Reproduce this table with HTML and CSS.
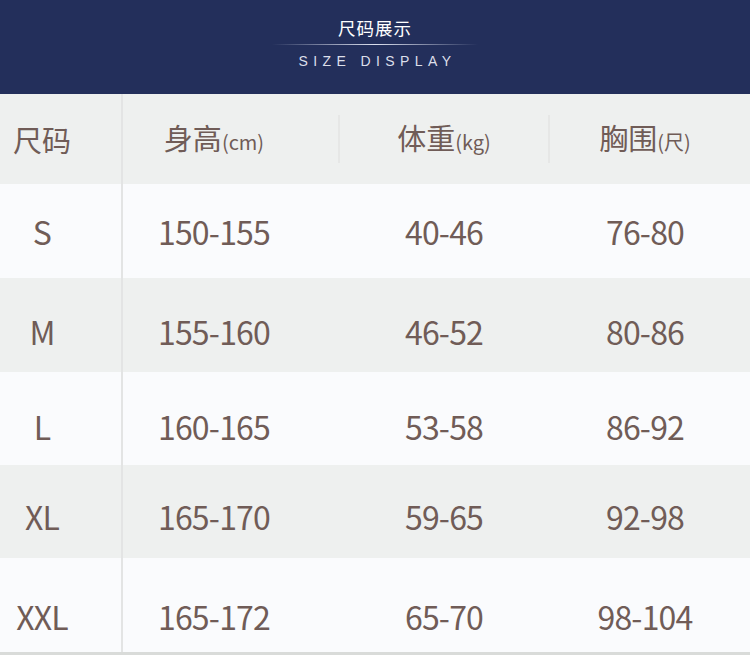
FILE: index.html
```html
<!DOCTYPE html>
<html lang="zh">
<head>
<meta charset="utf-8">
<link rel="stylesheet" href="styles.css">
</head>
<body>
<div class="page">
  <header class="banner">
    <div class="title">尺码展示</div>
    <div class="rule"></div>
    <div class="subtitle">SIZE DISPLAY</div>
  </header>
  <div class="table">
    <div class="row head">
      <div class="cell c1">尺码</div>
      <div class="cell c2">身高<span class="unit">(cm)</span></div>
      <div class="cell c3 sep">体重<span class="unit">(kg)</span></div>
      <div class="cell c4 sep">胸围<span class="unit">(尺)</span></div>
    </div>
    <div class="row white r-s">
      <div class="cell c1">S</div>
      <div class="cell c2">150-155</div>
      <div class="cell c3">40-46</div>
      <div class="cell c4">76-80</div>
    </div>
    <div class="row gray r-m">
      <div class="cell c1">M</div>
      <div class="cell c2">155-160</div>
      <div class="cell c3">46-52</div>
      <div class="cell c4">80-86</div>
    </div>
    <div class="row white r-l">
      <div class="cell c1">L</div>
      <div class="cell c2">160-165</div>
      <div class="cell c3">53-58</div>
      <div class="cell c4">86-92</div>
    </div>
    <div class="row gray r-xl">
      <div class="cell c1">XL</div>
      <div class="cell c2">165-170</div>
      <div class="cell c3">59-65</div>
      <div class="cell c4">92-98</div>
    </div>
    <div class="row white r-xxl">
      <div class="cell c1">XXL</div>
      <div class="cell c2">165-172</div>
      <div class="cell c3">65-70</div>
      <div class="cell c4">98-104</div>
    </div>
  </div>
  <div class="bottom"></div>
</div>
</body>
</html>
```
FILE: styles.css
```css
* { box-sizing: border-box; margin: 0; padding: 0; }
html, body { width: 750px; height: 655px; overflow: hidden; background: #fafbfd; }
body { font-family: "Noto Sans CJK SC", "Noto Sans", sans-serif; color: #705c57; }
.page { width: 750px; }

.banner {
  height: 94px;
  background: #232f5b;
  display: flex;
  flex-direction: column;
  align-items: center;
  padding-top: 16px;
}
.title {
  color: #ffffff;
  font-size: 17.5px;
  line-height: 24px;
  letter-spacing: 1px;
}
.rule {
  margin-top: 4px;
  width: 206px;
  height: 1px;
  background: linear-gradient(to right, rgba(200,205,225,0), rgba(220,224,238,1) 50%, rgba(200,205,225,0));
}
.subtitle {
  margin-top: 9px;
  color: #dcdfea;
  font-family: "Liberation Sans", Arial, sans-serif;
  font-size: 14px;
  line-height: 14px;
  letter-spacing: 5.4px;
  padding-left: 5px;
}

.table { display: flex; flex-direction: column; }
.row {
  display: grid;
  grid-template-columns: 84px 260px 200px 202px;
  align-items: center;
  height: 94px;
  font-size: 32px;
  letter-spacing: -0.8px;
  background-image: linear-gradient(to right, transparent 121px, #e3e4e4 121px, #e3e4e4 123px, transparent 123px);
}
.row.head {
  height: 90px;
  background-color: #eef0ef;
  font-size: 29px;
  letter-spacing: 0;
}
.row.gray { background-color: #eef0ef; }
.row.white { background-color: #fafbfd; }
.r-s { height: 94px; padding-top: 0; }
.r-m { height: 94px; padding-top: 12px; }
.r-l { height: 93px; padding-top: 14px; }
.r-xl { height: 93px; padding-top: 8px; }
.r-xxl { height: 94px; padding-top: 21px; }

.cell {
  text-align: center;
  white-space: nowrap;
  line-height: 40px;
}
.unit { font-size: 20px; }
.sep { position: relative; }
.head .c3::before, .head .c4::before {
  content: "";
  position: absolute;
  top: -2px;
  width: 2px;
  height: 48px;
  background: #e6e7e6;
}
.head .c3::before { left: -6px; }
.head .c4::before { left: 4px; }

.bottom { height: 3px; background: #d9dbd9; }
```
